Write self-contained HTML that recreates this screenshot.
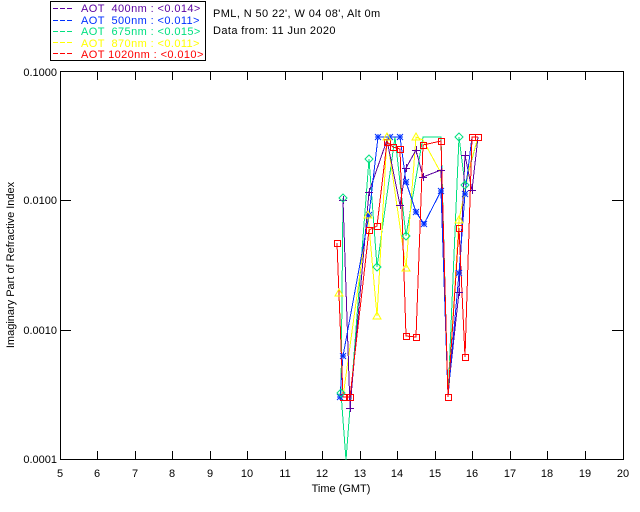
<!DOCTYPE html>
<html><head><meta charset="utf-8"><style>
html,body{margin:0;padding:0;background:#fff;}
svg{display:block;font-family:"Liberation Sans",sans-serif;}
</style></head><body>
<svg width="640" height="512" viewBox="0 0 640 512" xmlns="http://www.w3.org/2000/svg">
<rect width="640" height="512" fill="#fff"/>
<g font-size="11" letter-spacing="0.4">
<rect x="50.5" y="1.5" width="155" height="59" fill="none" stroke="#000" stroke-width="1"/>
<line x1="53" y1="8.5" x2="74" y2="8.5" stroke="#5a00a0" stroke-dasharray="5,2"/>
<text x="81" y="12" fill="#5a00a0" xml:space="preserve">AOT  400nm : &lt;0.014&gt;</text>
<line x1="53" y1="20.5" x2="74" y2="20.5" stroke="#0030ff" stroke-dasharray="5,2"/>
<text x="81" y="24" fill="#0030ff" xml:space="preserve">AOT  500nm : &lt;0.011&gt;</text>
<line x1="53" y1="31.5" x2="74" y2="31.5" stroke="#00e080" stroke-dasharray="5,2"/>
<text x="81" y="35" fill="#00e080" xml:space="preserve">AOT  675nm : &lt;0.015&gt;</text>
<line x1="53" y1="42.5" x2="74" y2="42.5" stroke="#ffff00" stroke-dasharray="5,2"/>
<text x="81" y="47" fill="#ffff00" xml:space="preserve">AOT  870nm : &lt;0.011&gt;</text>
<line x1="53" y1="53.5" x2="74" y2="53.5" stroke="#ff0000" stroke-dasharray="5,2"/>
<text x="81" y="58" fill="#ff0000" xml:space="preserve">AOT 1020nm : &lt;0.010&gt;</text>
<text x="213" y="17" fill="#000">PML, N 50 22', W 04 08', Alt 0m</text>
<text x="213" y="34" fill="#000">Data from: 11 Jun 2020</text>
</g>
<rect x="60.5" y="71.5" width="563" height="388" fill="none" stroke="#000" stroke-width="1"/>
<g stroke="#000" stroke-width="1" shape-rendering="crispEdges">
<path d="M97.5 72v8M135.5 72v8M172.5 72v8M210.5 72v8M247.5 72v8M285.5 72v8M322.5 72v8M360.5 72v8M397.5 72v8M435.5 72v8M472.5 72v8M510.5 72v8M547.5 72v8M585.5 72v8"/>
<path d="M97.5 459v-8M135.5 459v-8M172.5 459v-8M210.5 459v-8M247.5 459v-8M285.5 459v-8M322.5 459v-8M360.5 459v-8M397.5 459v-8M435.5 459v-8M472.5 459v-8M510.5 459v-8M547.5 459v-8M585.5 459v-8"/>
<path d="M60 200.5h11M60 330.5h11M623 200.5h-11M623 330.5h-11"/>
</g>
<g font-size="11" fill="#000">
<text x="57" y="76" text-anchor="end">0.1000</text>
<text x="57" y="204" text-anchor="end">0.0100</text>
<text x="57" y="334" text-anchor="end">0.0010</text>
<text x="57" y="463" text-anchor="end">0.0001</text>
<g text-anchor="middle">
<text x="60" y="477">5</text><text x="97" y="477">6</text><text x="135" y="477">7</text><text x="172" y="477">8</text><text x="210" y="477">9</text><text x="247" y="477">10</text><text x="285" y="477">11</text><text x="322" y="477">12</text><text x="360" y="477">13</text><text x="397" y="477">14</text><text x="435" y="477">15</text><text x="472" y="477">16</text><text x="510" y="477">17</text><text x="547" y="477">18</text><text x="585" y="477">19</text><text x="623" y="477">20</text>
<text x="341" y="492">Time (GMT)</text>
</g>
<text transform="translate(14 265) rotate(-90)" text-anchor="middle">Imaginary Part of Refractive Index</text>
</g>
<g fill="none" stroke-width="1" shape-rendering="crispEdges">
<polyline stroke="#00e080" points="343,198 341,393 346,460 369,159 377,267 395,137 406,236 423,137 441,137 448,397 459,137 465,185 478,137"/>
<polyline stroke="#ffff00" points="339,293 343,397 368,215 377,316 387,137 406,268 416,137 423,140 441,173 448,397 459,220 470,165 478,137"/>
<polyline stroke="#5a00a0" points="343,200 350,408 369,192 387,140 400,205 406,168 416,150 423,177 441,170 448,393 459,292 465,155 472,190 478,137"/>
<polyline stroke="#0030ff" points="340,397 343,356 369,215 378,137 390,137 400,137 406,182 416,212 424,224 441,191 448,397 459,273 465,194 472,137 478,137"/>
<polyline stroke="#ff0000" points="337,243 343,397 350,397 369,230 377,226 387,142 393,147 400,149 406,336 416,337 423,145 441,141 448,397 459,228 465,357 472,137 478,137"/>
</g>
<g fill="none" stroke="#ff0000" stroke-width="1" shape-rendering="crispEdges">
<rect x="334.5" y="240.5" width="6" height="6"/><rect x="340.5" y="394.5" width="6" height="6"/><rect x="347.5" y="394.5" width="6" height="6"/><rect x="366.5" y="227.5" width="6" height="6"/><rect x="374.5" y="223.5" width="6" height="6"/><rect x="384.5" y="139.5" width="6" height="6"/><rect x="390.5" y="144.5" width="6" height="6"/><rect x="397.5" y="146.5" width="6" height="6"/><rect x="403.5" y="333.5" width="6" height="6"/><rect x="413.5" y="334.5" width="6" height="6"/><rect x="420.5" y="142.5" width="6" height="6"/><rect x="438.5" y="138.5" width="6" height="6"/><rect x="445.5" y="394.5" width="6" height="6"/><rect x="456.5" y="225.5" width="6" height="6"/><rect x="462.5" y="354.5" width="6" height="6"/><rect x="469.5" y="134.5" width="6" height="6"/><rect x="475.5" y="134.5" width="6" height="6"/>
</g>
<g stroke="#0030ff" stroke-width="1">
<path d="M337 397h6M340 394v6M337 394l6 6M343 394l-6 6
M340 356h6M343 353v6M340 353l6 6M346 353l-6 6
M366 215h6M369 212v6M366 212l6 6M372 212l-6 6
M375 137h6M378 134v6M375 134l6 6M381 134l-6 6
M387 137h6M390 134v6M387 134l6 6M393 134l-6 6
M397 137h6M400 134v6M397 134l6 6M403 134l-6 6
M403 182h6M406 179v6M403 179l6 6M409 179l-6 6
M413 212h6M416 209v6M413 209l6 6M419 209l-6 6
M421 224h6M424 221v6M421 221l6 6M427 221l-6 6
M438 191h6M441 188v6M438 188l6 6M444 188l-6 6
M456 273h6M459 270v6M456 270l6 6M462 270l-6 6
M462 194h6M465 191v6M462 191l6 6M468 191l-6 6"/>
</g>
<g stroke="#5a00a0" stroke-width="1" shape-rendering="crispEdges">
<path d="M339 200.5h8M343.5 196v8M346 408.5h8M350.5 404v8M365 192.5h8M369.5 188v8M396 205.5h8M400.5 201v8M402 168.5h8M406.5 164v8M412 150.5h8M416.5 146v8M419 177.5h8M423.5 173v8M437 170.5h8M441.5 166v8M455 292.5h8M459.5 288v8M461 155.5h8M465.5 151v8M468 190.5h8M472.5 186v8"/>
</g>
<g stroke="#00e080" stroke-width="1" fill="none">
<path d="M343 194l4 4-4 4-4-4z M369 155l4 4-4 4-4-4z M377 263l4 4-4 4-4-4z M406 232l4 4-4 4-4-4z M459 133l4 4-4 4-4-4z M465 181l4 4-4 4-4-4z M341 389l4 4-4 4-4-4z"/>
</g>
<g stroke="#ffff00" stroke-width="1" fill="none">
<path d="M339 289l4 7h-8z M377 312l4 7h-8z M406 264l4 7h-8z M459 216l4 7h-8z M387 133l4 7h-8z M416 133l4 7h-8z M368 211l4 7h-8z"/>
</g>
</svg>
</body></html>
